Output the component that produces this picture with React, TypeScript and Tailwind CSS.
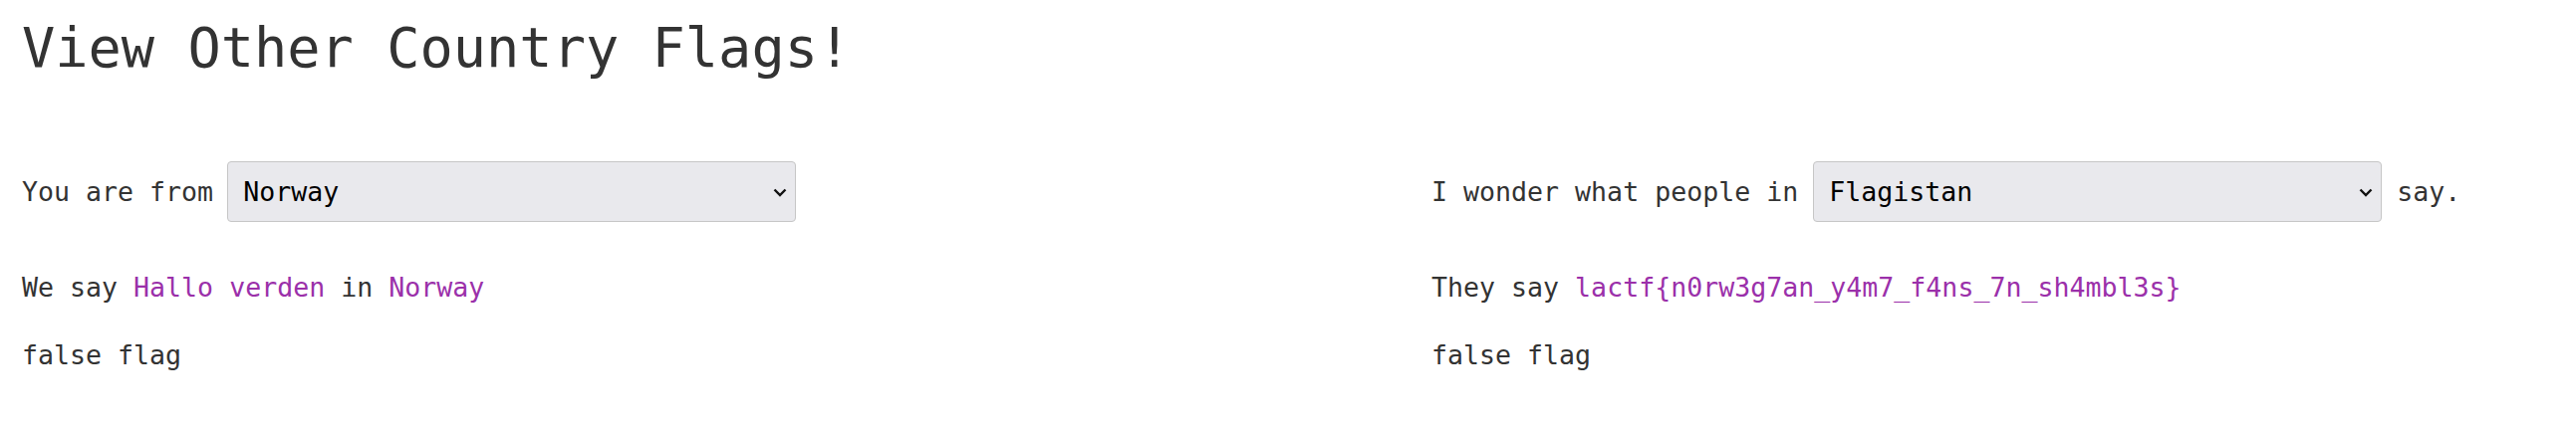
import React from "react";

const font = { fontFamily: '"DejaVu Sans Mono", "Liberation Mono", monospace' };

function Select({ value, options }: { value: string; options: string[] }) {
  return (
    <div className="relative w-[571px] h-[61px] shrink-0">
      <select
        defaultValue={value}
        className="appearance-none w-full h-full bg-[#e9e9ed] border border-[#c6c6c6] rounded-[4px] pl-[15px] text-[26.6px] text-black outline-none"
        style={font}
      >
        {options.map((o) => (
          <option key={o} value={o}>
            {o}
          </option>
        ))}
      </select>
      <svg
        className="absolute right-[9px] top-[27px] pointer-events-none"
        width="14"
        height="9"
        viewBox="0 0 14 9"
      >
        <path d="M1.5 1.5 L7 7 L12.5 1.5" fill="none" stroke="#111" strokeWidth="2.4" />
      </svg>
    </div>
  );
}

export default function App() {
  const countries = ["Norway", "Flagistan", "Sweden", "Denmark"];
  return (
    <div className="bg-white min-h-[430px] pl-[22px] text-[#333]" style={font}>
      <h1 className="pt-[16px] text-[55.3px] leading-[64px] font-normal">View Other Country Flags!</h1>
      <div className="flex mt-[82px]">
        <div className="w-[1415px] shrink-0">
          <div className="flex items-center gap-[14px] text-[26.6px]">
            <span>You are from</span>
            <Select value="Norway" options={countries} />
          </div>
          <p className="mt-[50px] text-[26.6px] leading-[32px]">
            We say <span className="text-[#9b30aa]">Hallo verden</span> in{" "}
            <span className="text-[#9b30aa]">Norway</span>
          </p>
          <p className="mt-[36px] text-[26.6px] leading-[32px]">false flag</p>
        </div>
        <div>
          <div className="flex items-center gap-[15px] text-[26.6px]">
            <span>I wonder what people in</span>
            <Select value="Flagistan" options={countries} />
            <span>say.</span>
          </div>
          <p className="mt-[50px] text-[26.6px] leading-[32px]">
            They say <span className="text-[#9b30aa]">lactf{"{"}n0rw3g7an_y4m7_f4ns_7n_sh4mbl3s{"}"}</span>
          </p>
          <p className="mt-[36px] text-[26.6px] leading-[32px]">false flag</p>
        </div>
      </div>
    </div>
  );
}
